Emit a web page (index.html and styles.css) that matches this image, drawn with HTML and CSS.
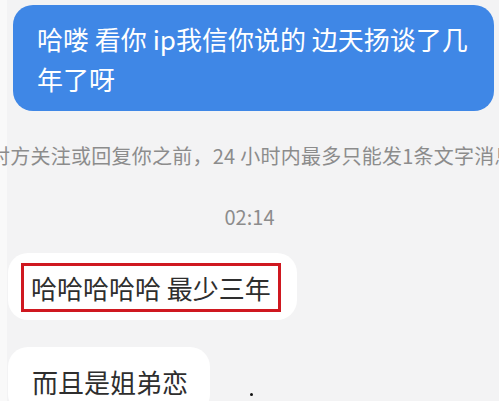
FILE: index.html
```html
<!DOCTYPE html>
<html lang="zh-CN">
<head>
<meta charset="utf-8">
<title>聊天</title>
<link rel="stylesheet" href="styles.css">
</head>
<body>
<div class="chat">
  <div class="row row-out">
    <div class="bubble bubble-out">哈喽 看你 ip我信你说的 边天扬谈了几年了呀</div>
  </div>
  <div class="notice"><span class="notice-text">对方关注或回复你之前，24 小时内最多只能发1条文字消息</span></div>
  <div class="time">02:14</div>
  <div class="row row-in">
    <div class="bubble bubble-in bubble-marked"><span class="mark">哈哈哈哈哈 最少三年</span></div>
  </div>
  <div class="row row-in row-last">
    <div class="bubble bubble-in bubble-plain">而且是姐弟恋</div>
    <span class="dot"></span>
  </div>
</div>
</body>
</html>
```
FILE: styles.css
```css
* { box-sizing: border-box; }

html, body {
  margin: 0;
  padding: 0;
  height: 100%;
}

body {
  background: linear-gradient(to right, #f9f9f9 0, #f9f9f9 7px, #f3f3f4 7px);
  font-family: "Noto Sans CJK SC", "Noto Sans", sans-serif;
  overflow: hidden;
}

.chat {
  display: flex;
  flex-direction: column;
}

.row {
  display: flex;
}

.row-out {
  padding: 5px 5px 0 13px;
}

.bubble {
  font-size: 26px;
}

.bubble-out {
  flex: 1;
  background: #3f87e6;
  color: #ffffff;
  border-radius: 20px;
  padding: 14px 20px 12px 24px;
  line-height: 40px;
}

.notice {
  margin-top: 25px;
  height: 40px;
  display: flex;
  justify-content: flex-start;
  align-items: center;
  overflow: hidden;
  white-space: nowrap;
}

.notice-text {
  margin-left: -10px;
  font-size: 20px;
  letter-spacing: 0.25px;
  color: #8c8c8c;
  line-height: 40px;
}

.time {
  margin-top: 31px;
  text-align: center;
  font-size: 20px;
  line-height: 20px;
  color: #8c8c8c;
}

.row-in {
  padding-left: 8px;
}

.bubble-in {
  background: #ffffff;
  color: #2e2e2e;
  border-radius: 20px;
}

.bubble-marked {
  margin-top: 26px;
  padding: 10px 16px 8px 13px;
}

.mark {
  display: inline-block;
  border: 3px solid #cf1820;
  padding: 0 7px;
  line-height: 43px;
}

.bubble-plain {
  margin-top: 27px;
  padding: 10px 22px 8px 24px;
  line-height: 49px;
}

.dot {
  width: 3px;
  height: 3px;
  border-radius: 50%;
  background: #111111;
  margin-top: 73px;
  margin-left: 40px;
}
```
